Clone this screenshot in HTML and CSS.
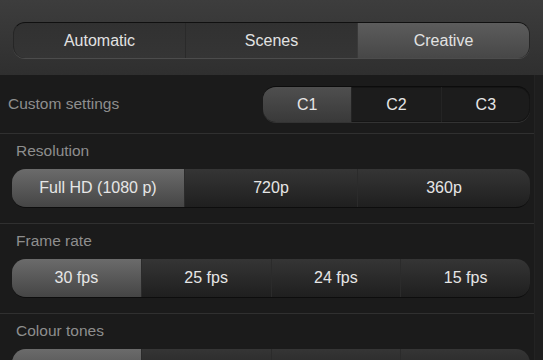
FILE: index.html
```html
<!DOCTYPE html>
<html lang="en">
<head>
  <meta charset="UTF-8" />
  <title>Video settings</title>
  <link rel="stylesheet" href="styles.css">
</head>
<body>
  <div class="header">
    <div class="tabs">
      <div class="tab">Automatic</div>
      <div class="tab">Scenes</div>
      <div class="tab active">Creative</div>
    </div>
  </div>

  <div class="body-wrap">
    <div class="settings">
      <div class="row row-inline">
        <span class="label">Custom settings</span>
        <div class="seg seg-small">
          <div class="opt active">C1</div>
          <div class="opt">C2</div>
          <div class="opt">C3</div>
        </div>
      </div>

      <div class="row">
        <div class="label">Resolution</div>
        <div class="seg">
          <div class="opt active">Full HD (1080 p)</div>
          <div class="opt">720p</div>
          <div class="opt">360p</div>
        </div>
      </div>

      <div class="row">
        <div class="label">Frame rate</div>
        <div class="seg">
          <div class="opt active">30 fps</div>
          <div class="opt">25 fps</div>
          <div class="opt">24 fps</div>
          <div class="opt">15 fps</div>
        </div>
      </div>

      <div class="row">
        <div class="label">Colour tones</div>
        <div class="seg">
          <div class="opt active"></div>
          <div class="opt"></div>
          <div class="opt"></div>
          <div class="opt"></div>
        </div>
      </div>
    </div>
    <div class="scroll-track"></div>
  </div>
</body>
</html>
```

FILE: styles.css
```css
* {
  margin: 0;
  padding: 0;
  box-sizing: border-box;
}

body {
  font-family: "Liberation Sans", Arial, sans-serif;
  font-size: 15px;
  background-color: #1b1b1b;
  color: #e6e6e6;
  width: 543px;
  height: 360px;
  overflow: hidden;
}

/* top mode switch */
.header {
  height: 75px;
  padding: 22px 13px 0 13px;
  background: linear-gradient(#3d3d3d, #2f2f2f);
}

.tabs {
  display: flex;
  height: 36px;
  border-radius: 12px;
  overflow: hidden;
  border-top: 1px solid #101010;
  border-left: 1px solid #262626;
  border-right: 1px solid #262626;
  box-shadow: 0 1px 0 #4c4c4c;
  background: linear-gradient(#313131, #353535);
}

.tab {
  flex: 1;
  display: flex;
  align-items: center;
  justify-content: center;
  font-size: 16px;
  border-left: 1px solid #2a2a2a;
  color: #e2e2e2;
}

.tab:first-child {
  border-left: none;
}

.tab.active {
  background: linear-gradient(#5c5c5c, #474747);
  border-left-color: #3a3a3a;
}

/* list of settings */
.body-wrap {
  display: flex;
  height: 285px;
}

.settings {
  flex: 1;
  height: 285px;
  overflow: hidden;
}

.scroll-track {
  width: 9px;
  background-color: #1e1e1e;
  border-left: 1px solid #232323;
}

.row {
  padding: 8px 4px 15px 12px;
  border-bottom: 1px solid #303030;
}

.row-inline {
  height: 59px;
  padding: 0 4px 0 8px;
  display: flex;
  align-items: center;
  justify-content: space-between;
}

.label {
  color: #8e8e8e;
  font-size: 15.5px;
  line-height: 18px;
  margin-bottom: 9px;
  padding-left: 4px;
}

.row-inline .label {
  margin: 0;
  padding: 0;
}

.seg {
  display: flex;
  height: 39px;
  border-radius: 14px;
  overflow: hidden;
  background: linear-gradient(#353535, #1f1f1f);
  border-bottom: 1px solid #0d0d0d;
}

.opt {
  flex: 1;
  display: flex;
  align-items: center;
  justify-content: center;
  font-size: 16px;
  color: #e6e6e6;
  border-left: 1px solid #2b2b2b;
}

.opt:first-child {
  border-left: none;
}

.opt.active {
  background: linear-gradient(#6b6b6b, #454545);
}

.seg-small {
  width: 267px;
  height: 36px;
  border-radius: 13px;
  background: #1c1c1c;
  border-top: 1px solid #0c0c0c;
  border-bottom: none;
  box-shadow: 0 1px 0 #333333, inset 0 0 0 1px #151515;
}

.seg-small .opt {
  border-left-color: #242424;
}

.seg-small .opt.active {
  background: linear-gradient(#4f4f4f, #393939);
}
```
